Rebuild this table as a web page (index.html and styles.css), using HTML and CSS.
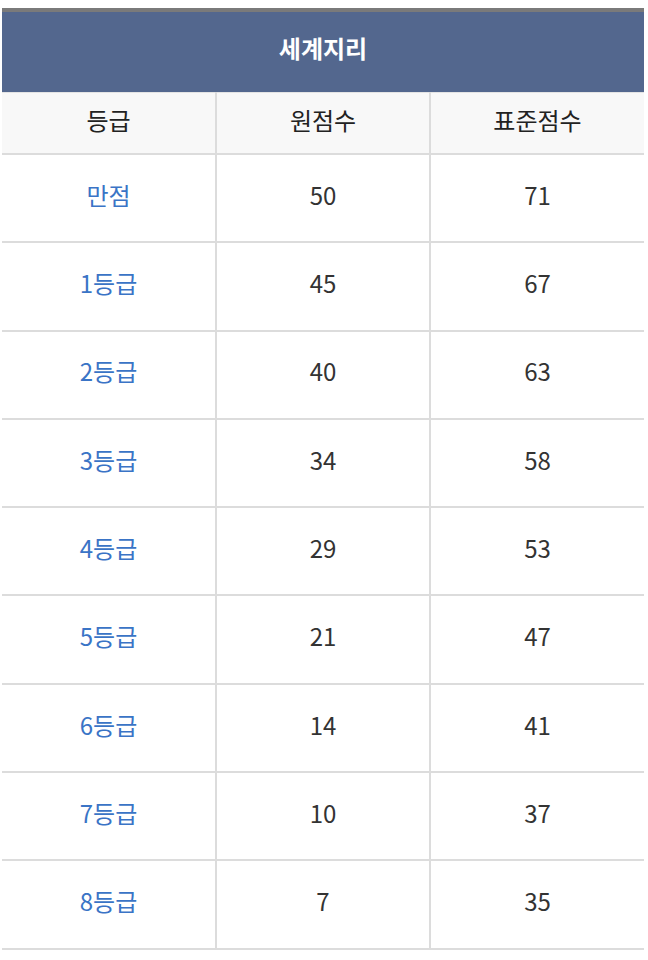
FILE: index.html
```html
<!DOCTYPE html>
<html lang="ko">
<head>
<meta charset="utf-8">
<link rel="stylesheet" href="styles.css">
</head>
<body>
<table class="score">
  <thead>
    <tr><th colspan="3" class="title">세계지리</th></tr>
    <tr class="cols"><th>등급</th><th>원점수</th><th>표준점수</th></tr>
  </thead>
  <tbody>
    <tr><td class="grade">만점</td><td>50</td><td>71</td></tr>
    <tr><td class="grade">1등급</td><td>45</td><td>67</td></tr>
    <tr><td class="grade">2등급</td><td>40</td><td>63</td></tr>
    <tr><td class="grade">3등급</td><td>34</td><td>58</td></tr>
    <tr><td class="grade">4등급</td><td>29</td><td>53</td></tr>
    <tr><td class="grade">5등급</td><td>21</td><td>47</td></tr>
    <tr><td class="grade">6등급</td><td>14</td><td>41</td></tr>
    <tr><td class="grade">7등급</td><td>10</td><td>37</td></tr>
    <tr><td class="grade">8등급</td><td>7</td><td>35</td></tr>
  </tbody>
</table>
</body>
</html>
```
FILE: styles.css
```css
html, body {
  margin: 0;
  padding: 0;
  background: #fff;
}
body {
  padding: 8px 4px 0 2px;
  font-family: "Noto Sans CJK KR", "Noto Sans", sans-serif;
}
.score {
  width: 642px;
  border-collapse: collapse;
  table-layout: fixed;
  border-top: 4px solid #7a7a7a;
}
.score th, .score td {
  text-align: center;
  vertical-align: middle;
  padding: 0 0 6px;
  line-height: 1.2;
}
.title {
  background: #53678e;
  color: #fff;
  font-size: 24px;
  font-weight: 700;
  height: 72px;
  border-bottom: 1px solid #e4e4e4;
}
.score .title {
  padding-bottom: 8px;
}
.cols th {
  background: #f8f8f8;
  color: #222;
  font-size: 24px;
  font-weight: 400;
  height: 54px;
  border-bottom: 2px solid #dcdcdc;
}
.cols th + th, td + td {
  border-left: 2px solid #dcdcdc;
}
td {
  height: 80.3px;
  font-size: 24px;
  color: #333;
  border-bottom: 2px solid #dcdcdc;
}
td.grade {
  color: #3a74c6;
}
```
